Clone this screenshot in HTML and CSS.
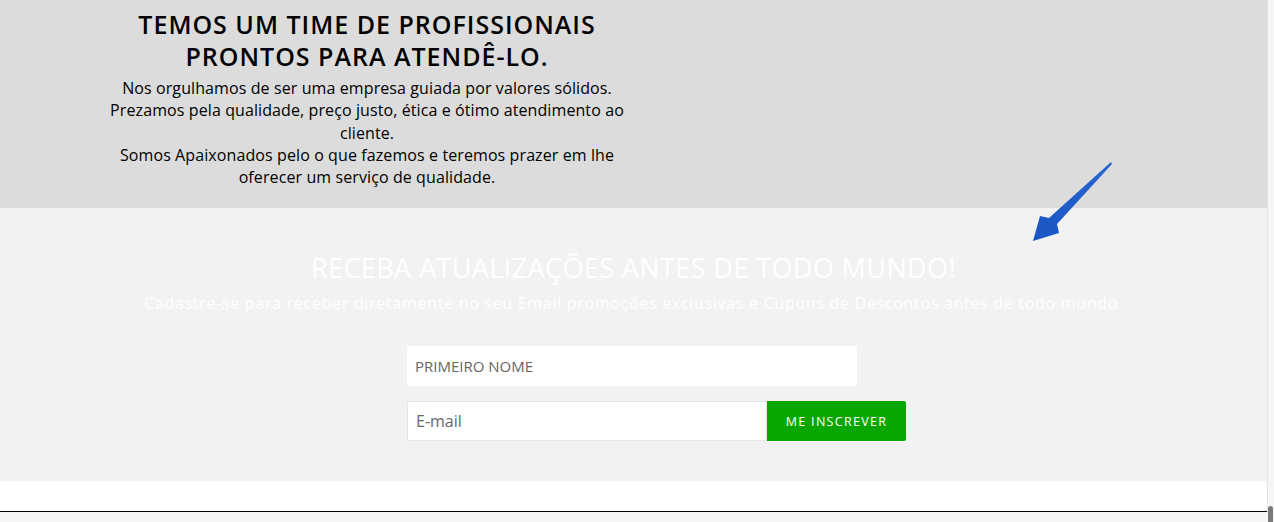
FILE: index.html
```
<!DOCTYPE html>
<html lang="pt-BR">

<head>
    <meta charset="UTF-8">
    <meta name="viewport" content="width=device-width, initial-scale=1.0">
    <title>Atendimento</title>
    <link rel="stylesheet" href="styles.css">
</head>

<body>
    <div class="page">
        <!-- Sobre -->
        <section class="about">
            <div class="about-text">
                <h2>Temos um time de profissionais prontos para atendê-lo.</h2>
                <p>
                    Nos orgulhamos de ser uma empresa guiada por valores sólidos.<br>
                    Prezamos pela qualidade, preço justo, ética e ótimo atendimento ao cliente.<br>
                    Somos Apaixonados pelo o que fazemos e teremos prazer em lhe oferecer um serviço de qualidade.
                </p>
            </div>
        </section>

        <!-- Newsletter -->
        <section class="newsletter">
            <h3>Receba atualizações antes de todo mundo!</h3>
            <p class="newsletter-sub">Cadastre-se para receber diretamente no seu Email promoções exclusivas e Cupons de Descontos antes de todo mundo.</p>
            <form class="signup">
                <input class="field field-name" type="text" placeholder="PRIMEIRO NOME">
                <div class="signup-row">
                    <input class="field field-mail" type="email" placeholder="E-mail">
                    <button type="button">Me inscrever</button>
                </div>
            </form>
        </section>

        <div class="footer-gap"></div>
        <div class="footer-line"></div>

        <svg class="arrow" width="95" height="90" viewBox="0 0 95 90">
            <defs>
                <linearGradient id="arrowFill" x1="0" y1="1" x2="1" y2="0">
                    <stop offset="0" stop-color="#1a55c2" />
                    <stop offset="1" stop-color="#2766d2" />
                </linearGradient>
            </defs>
            <polygon points="86,4 87,6 32,66 34,75 8,83 15,58 24,60" fill="url(#arrowFill)" />
        </svg>
    </div>
    <div class="scroll-thumb"></div>
</body>

</html>
```

FILE: styles.css
```
body {
    margin: 0;
    background-color: #f6f6f6;
    font-family: "Open Sans", "Liberation Sans", sans-serif;
    height: 522px;
    overflow: hidden;
    position: relative;
}

.page {
    width: 1267px;
    background-color: white;
    border-right: 1px solid #e4e4e4;
    position: relative;
}

.about {
    background-color: #dcdcdc;
    height: 208px;
    box-sizing: border-box;
    padding-top: 8px;
}

.about-text {
    width: 540px;
    margin-left: 97px;
    text-align: center;
    color: #000;
}

.about-text h2 {
    margin: 0;
    font-size: 25px;
    line-height: 32px;
    font-weight: 600;
    text-transform: uppercase;
    letter-spacing: 1px;
}

.about-text p {
    margin: 5px 0 0;
    font-size: 16px;
    line-height: 22.3px;
    letter-spacing: 0.1px;
}

.newsletter {
    background-color: #f2f2f2;
    height: 273px;
    box-sizing: border-box;
    padding-top: 45px;
    text-align: center;
    color: white;
}

.newsletter h3 {
    margin: 0;
    font-size: 27px;
    line-height: 30px;
    font-weight: 400;
    text-transform: uppercase;
    letter-spacing: 0.4px;
}

.newsletter-sub {
    margin: 9px 0 0;
    font-size: 16px;
    line-height: 22px;
    letter-spacing: 0.7px;
}

.signup {
    width: 499px;
    margin: 32px 0 0 407px;
    display: flex;
    flex-direction: column;
    gap: 15px;
}

.signup-row {
    display: flex;
}

.field {
    height: 40px;
    box-sizing: border-box;
    border: none;
    background-color: white;
    padding: 0 8px;
    font-family: inherit;
    font-size: 15px;
    color: #555;
}

.field::placeholder {
    color: #666;
}

.field-name {
    width: 450px;
}

.field-mail {
    width: 360px;
    border: 1px solid #e6e6e6;
    font-size: 16px;
}

.signup button {
    width: 139px;
    height: 40px;
    border: none;
    border-radius: 0 2px 2px 0;
    background-color: #08a700;
    color: white;
    font-family: inherit;
    font-size: 12.5px;
    letter-spacing: 1.3px;
    text-transform: uppercase;
    cursor: pointer;
}

.footer-gap {
    height: 30px;
}

.footer-line {
    height: 1px;
    background-color: #000;
    margin-bottom: 10px;
}

.arrow {
    position: absolute;
    left: 1025px;
    top: 158px;
}

.scroll-thumb {
    position: absolute;
    left: 1268px;
    top: 506px;
    width: 5px;
    height: 16px;
    border-radius: 3px 3px 0 0;
    background-color: #7a7a7a;
}
```
